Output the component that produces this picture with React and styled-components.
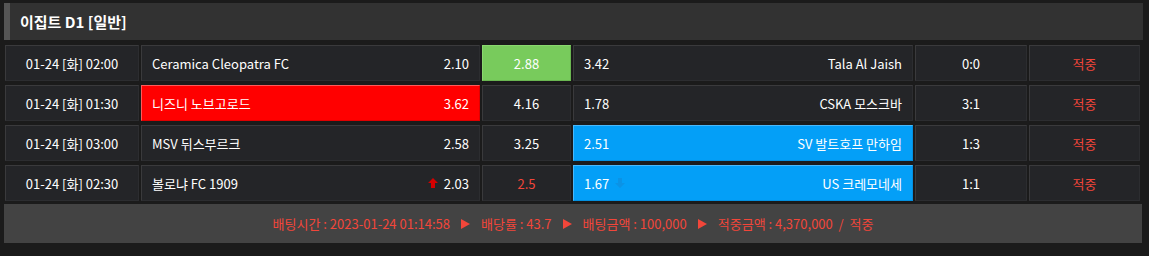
import React from 'react';
import styled, { createGlobalStyle } from 'styled-components';

const GlobalStyle = createGlobalStyle`
    body {
        margin: 0;
        background: #1b1b1b;
        font-family: "Noto Sans CJK KR", "Noto Sans", sans-serif;
    }
`

const Wrapper = styled.div`
    padding: 3px 6px 0 4px;
`

const Header = styled.div`
    display: flex;
    align-items: center;
    height: 37px;
    padding-left: 10px;
    background: #323232;
    border-left: 6px solid #555;
    color: #fff;
    font-size: 15px;
    font-weight: 700;
`

const List = styled.ul`
    list-style-type: none;
    margin: 5px 3px 0 1px;
    padding: 0;
    display: flex;
    flex-direction: column;
    gap: 4px;
`

const Row = styled.li`
    display: grid;
    grid-template-columns: 134px 339px 89px 340px 112px 111px;
    gap: 2px;
    height: 36px;
`

const Cell = styled.div`
    display: flex;
    align-items: center;
    justify-content: ${props => props.$align || 'center'};
    gap: 6px;
    padding: 0 ${props => props.$pad || 0}px;
    box-sizing: border-box;
    background: ${props => props.$bg || '#242528'};
    border: 1px solid ${props => props.$border || '#2c2d30'};
    border-top-color: ${props => props.$borderTop || '#3a3a3c'};
    border-left-color: ${props => props.$borderTop || '#3a3a3c'};
    color: ${props => props.$color || '#fff'};
    font-size: 13px;
`

const Team = styled.span`
    flex: 1;
    white-space: nowrap;
    text-align: ${props => props.$right ? 'right' : 'left'};
`

const Odds = styled.span`
    display: flex;
    align-items: center;
    gap: 6px;
`

const Footer = styled.div`
    display: flex;
    align-items: center;
    justify-content: center;
    gap: 11px;
    height: 39px;
    margin: 3px 1px 0 0;
    background: #434343;
    color: #f2463a;
    font-size: 13px;
`

const Arrow = ({ up, color }) => (
    <svg width="10" height="10" viewBox="0 0 10 10">
        {up
            ? <path d="M5 0 L10 5 L7 5 L7 10 L3 10 L3 5 L0 5 Z" fill={color} />
            : <path d="M5 10 L10 5 L7 5 L7 0 L3 0 L3 5 L0 5 Z" fill={color} />}
    </svg>
)

const Play = () => (
    <svg width="9" height="10" viewBox="0 0 9 10">
        <path d="M0 0 L9 5 L0 10 Z" fill="#f2463a" />
    </svg>
)

const green = { bg: '#78cb5c', border: '#6ab651', top: '#8ad86f' }
const red = { bg: '#ff0000', border: '#e00000', top: '#ff5a5a' }
const blue = { bg: '#049ff7', border: '#0390e0', top: '#4ab8fa' }

const games = [
    { time: '01-24 [화] 02:00', home: 'Ceramica Cleopatra FC', h: '2.10', d: '2.88', a: '3.42', away: 'Tala Al Jaish', score: '0:0', pick: 'draw', pickColor: green },
    { time: '01-24 [화] 01:30', home: '니즈니 노브고로드', h: '3.62', d: '4.16', a: '1.78', away: 'CSKA 모스크바', score: '3:1', pick: 'home', pickColor: red },
    { time: '01-24 [화] 03:00', home: 'MSV 뒤스부르크', h: '2.58', d: '3.25', a: '2.51', away: 'SV 발트호프 만하임', score: '1:3', pick: 'away', pickColor: blue },
    { time: '01-24 [화] 02:30', home: '볼로냐 FC 1909', h: '2.03', d: '2.5', a: '1.67', away: 'US 크레모네세', score: '1:1', pick: 'away', pickColor: blue, homeUp: true, drawRed: true, awayDown: true },
]

function App() {
    return (
        <Wrapper>
            <GlobalStyle />
            <Header>이집트 D1 [일반]</Header>
            <List>
                {games.map(g => {
                    const sel = side => g.pick === side ? { $bg: g.pickColor.bg, $border: g.pickColor.border, $borderTop: g.pickColor.top } : {}
                    return (
                        <Row key={g.time + g.home}>
                            <Cell>{g.time}</Cell>
                            <Cell $align="space-between" $pad={10} {...sel('home')}>
                                <Team>{g.home}</Team>
                                <Odds>
                                    {g.homeUp && <Arrow up color="#d40000" />}
                                    {g.h}
                                </Odds>
                            </Cell>
                            <Cell $color={g.drawRed ? '#f2463a' : '#fff'} {...sel('draw')}>{g.d}</Cell>
                            <Cell $align="space-between" $pad={10} {...sel('away')}>
                                <Odds>
                                    {g.a}
                                    {g.awayDown && <Arrow color="#0b93e6" />}
                                </Odds>
                                <Team $right>{g.away}</Team>
                            </Cell>
                            <Cell>{g.score}</Cell>
                            <Cell $color="#f2463a">적중</Cell>
                        </Row>
                    )
                })}
            </List>
            <Footer>
                <span>배팅시간 : 2023-01-24 01:14:58</span>
                <Play />
                <span>배당률 : 43.7</span>
                <Play />
                <span>배팅금액 : 100,000</span>
                <Play />
                <span>적중금액 : 4,370,000 &nbsp;/ &nbsp;적중</span>
            </Footer>
        </Wrapper>
    )
}

export default App
